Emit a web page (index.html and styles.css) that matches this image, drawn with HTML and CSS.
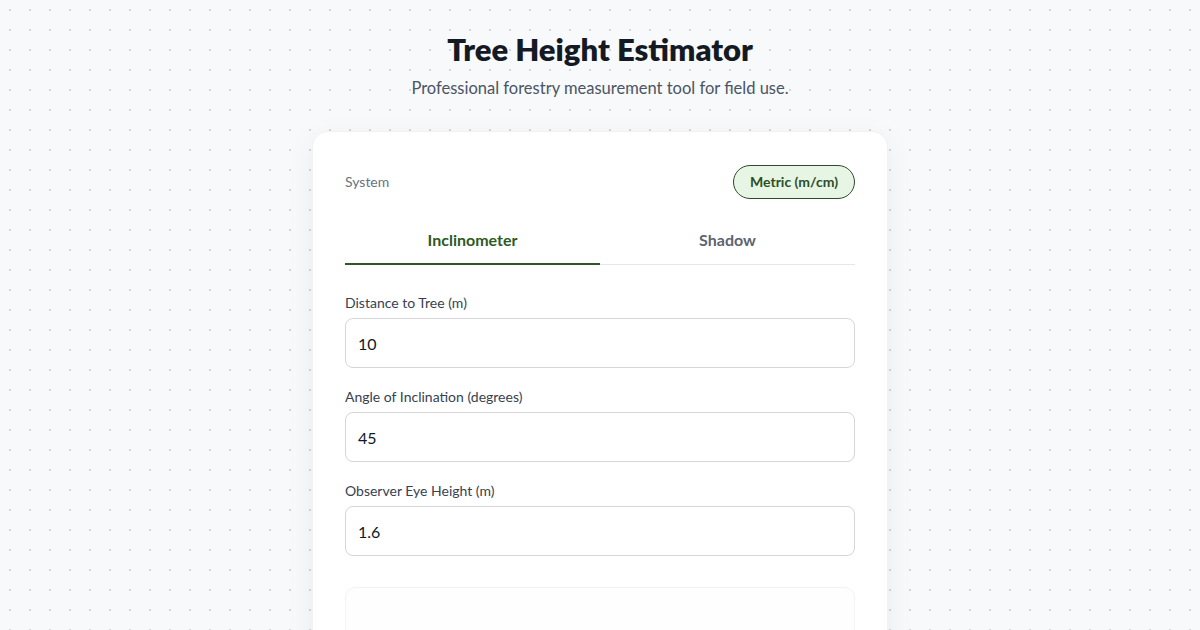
FILE: index.html
```html
<!DOCTYPE html>
<html lang="en">
<head>
  <meta charset="UTF-8">
  <meta name="viewport" content="width=device-width, initial-scale=1.0">
  <title>Tree Height Estimator</title>
  <link rel="stylesheet" href="styles.css">
</head>
<body>
  <header class="page-header">
    <h1>Tree Height Estimator</h1>
    <p>Professional forestry measurement tool for field use.</p>
  </header>

  <main class="card">
    <div class="system-row">
      <span class="system-label">System</span>
      <button type="button" class="unit-pill">Metric (m/cm)</button>
    </div>

    <div class="tabs">
      <button type="button" class="tab active">Inclinometer</button>
      <button type="button" class="tab">Shadow</button>
    </div>

    <form class="fields">
      <div class="field">
        <label for="distance">Distance to Tree (m)</label>
        <input type="text" id="distance" value="10">
      </div>
      <div class="field">
        <label for="angle">Angle of Inclination (degrees)</label>
        <input type="text" id="angle" value="45">
      </div>
      <div class="field">
        <label for="eye">Observer Eye Height (m)</label>
        <input type="text" id="eye" value="1.6">
      </div>
    </form>

    <div class="result"></div>
  </main>
</body>
</html>
```

FILE: styles.css
```css
body {
  font-family: Lato, "Noto Sans", sans-serif;
  background-color: #f8f9fb;
  background-image: radial-gradient(circle, #d3d6db 1px, transparent 1.3px);
  background-size: 20px 20px;
  background-position: 0 0;
  margin: 0;
  padding: 0;
  height: 630px;
  overflow: hidden;
}
.page-header {
  text-align: center;
  padding-top: 30px;
}
.page-header h1 {
  margin: 0;
  font-size: 31px;
  font-weight: 800;
  color: #141a24;
  line-height: 38px;
}
.page-header p {
  margin: 8px 0 0;
  font-size: 16.5px;
  color: #4b5563;
  line-height: 24px;
}
.card {
  width: 510px;
  margin: 31px auto 0;
  background: #ffffff;
  border: 1px solid #f1f2f4;
  border-radius: 16px;
  box-shadow: 0 8px 30px rgba(15, 23, 42, 0.06);
  padding: 32px 32px 40px;
}
.system-row {
  display: flex;
  justify-content: space-between;
  align-items: center;
  height: 35px;
}
.system-label {
  font-size: 14px;
  color: #6b7280;
}
.unit-pill {
  font-family: inherit;
  font-size: 14px;
  font-weight: 700;
  color: #2c4f26;
  background: #e7f5e4;
  border: 1px solid #2e4a2a;
  border-radius: 18px;
  height: 34px;
  padding: 0 16px;
}
.tabs {
  display: grid;
  grid-template-columns: 1fr 1fr;
  margin-top: 16px;
  border-bottom: 1px solid #e5e7eb;
}
.tab {
  font-family: inherit;
  font-size: 16px;
  font-weight: 700;
  color: #5b6470;
  background: none;
  border: none;
  border-bottom: 2px solid transparent;
  margin-bottom: -1px;
  height: 50px;
  padding: 0;
}
.tab.active {
  color: #2d5a24;
  border-bottom-color: #2f5627;
}
.fields {
  display: grid;
  gap: 19px;
  margin-top: 28px;
}
.field label {
  display: block;
  font-size: 14px;
  color: #374151;
  line-height: 20px;
  margin-bottom: 5px;
}
.field input {
  box-sizing: border-box;
  width: 100%;
  height: 50px;
  padding: 0 12px;
  font-family: inherit;
  font-size: 16px;
  color: #111827;
  border: 1px solid #d4d6da;
  border-radius: 8px;
  background: #ffffff;
}
.result {
  margin-top: 31px;
  height: 120px;
  border: 1px solid #f1f2f4;
  border-radius: 10px;
  background: #fefefe;
}
```
